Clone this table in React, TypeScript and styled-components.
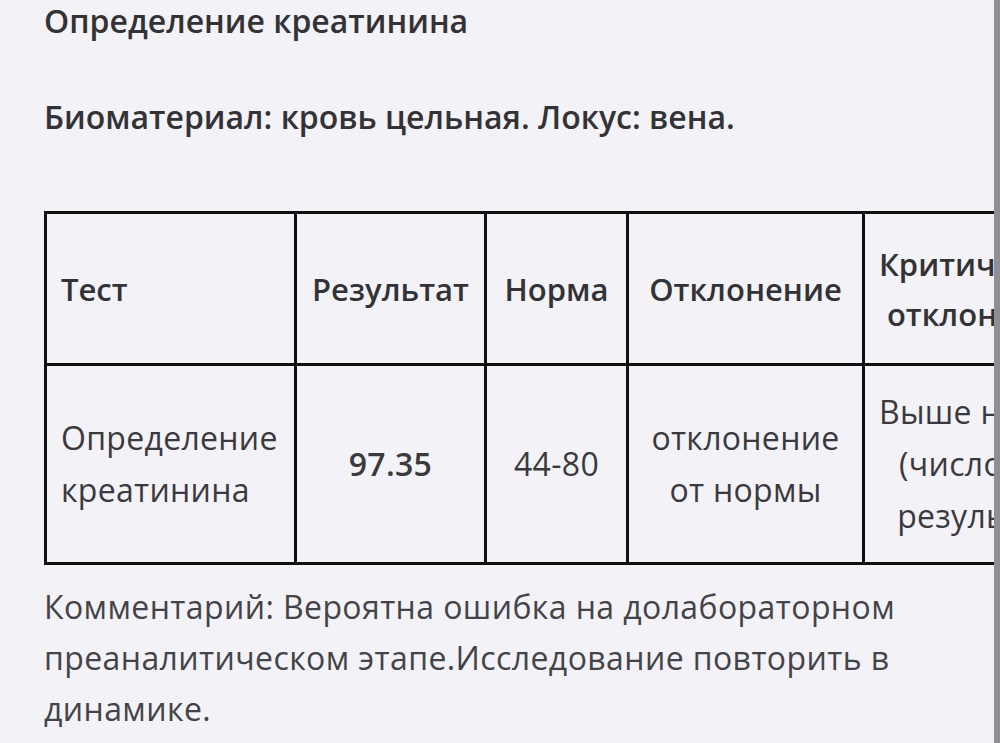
import React from "react";
import styled, { createGlobalStyle } from "styled-components";

const GlobalStyle = createGlobalStyle`
  html, body {
    margin: 0;
    padding: 0;
    background: #f2f2f7;
  }
  body {
    font-family: "Open Sans", "Noto Sans", sans-serif;
    color: #333336;
  }
`;

const Page = styled.div`
  display: flex;
  height: 743px;
  overflow: hidden;
  background: #f2f2f7;
`;

const Content = styled.main`
  flex: 1;
  min-width: 0;
  padding-left: 44px;
  overflow: hidden;
`;

const EdgeBar = styled.div`
  width: 6px;
  flex-shrink: 0;
  background: #8e8e93;
`;

const Heading = styled.h2<{ gap?: number }>`
  margin: ${(p) => p.gap ?? 0}px 0 0;
  font-size: 32px;
  line-height: 42px;
  font-weight: 600;
  color: #333336;
  white-space: nowrap;
`;

const Table = styled.table`
  margin-top: 73px;
  border-collapse: collapse;
  table-layout: fixed;
  width: 1200px;
  border: 3px solid #111;
`;

const HeadCell = styled.th<{ align?: "left" | "center" }>`
  height: 149px;
  padding: 0 14px;
  border: 3px solid #111;
  font-size: 31px;
  line-height: 50px;
  font-weight: 600;
  color: #333336;
  text-align: ${(p) => p.align ?? "center"};
  white-space: nowrap;
`;

const BodyCell = styled.td<{ align?: "left" | "center"; strong?: boolean }>`
  height: 196px;
  padding: 0 14px;
  border: 3px solid #111;
  font-size: 32px;
  line-height: 52px;
  letter-spacing: 0.3px;
  font-weight: ${(p) => (p.strong ? 600 : 400)};
  color: #3a3a3e;
  text-align: ${(p) => p.align ?? "center"};
  vertical-align: middle;
  white-space: nowrap;
`;

const Comment = styled.p`
  margin: 16px 0 0;
  width: 900px;
  font-size: 32px;
  line-height: 51px;
  letter-spacing: 0.4px;
  color: #444448;
`;

const columns = [250, 190, 142, 236, 234, 346];

export default function App() {
  return (
    <>
      <GlobalStyle />
      <Page>
        <Content>
          <Heading>Определение креатинина</Heading>
          <Heading gap={54}>Биоматериал: кровь цельная. Локус: вена.</Heading>
          <Table>
            <colgroup>
              {columns.map((w, i) => (
                <col key={i} style={{ width: w }} />
              ))}
            </colgroup>
            <thead>
              <tr>
                <HeadCell align="left">Тест</HeadCell>
                <HeadCell>Результат</HeadCell>
                <HeadCell>Норма</HeadCell>
                <HeadCell>Отклонение</HeadCell>
                <HeadCell>
                  Критическое
                  <br />
                  отклонение
                </HeadCell>
                <HeadCell>Комментарий</HeadCell>
              </tr>
            </thead>
            <tbody>
              <tr>
                <BodyCell align="left">
                  Определение
                  <br />
                  креатинина
                </BodyCell>
                <BodyCell strong>97.35</BodyCell>
                <BodyCell>44-80</BodyCell>
                <BodyCell>
                  отклонение
                  <br />
                  от нормы
                </BodyCell>
                <BodyCell>
                  Выше нормы
                  <br />
                  (числовой
                  <br />
                  результат)
                </BodyCell>
                <BodyCell>—</BodyCell>
              </tr>
            </tbody>
          </Table>
          <Comment>
            Комментарий: Вероятна ошибка на долабораторном преаналитическом этапе.Исследование повторить в динамике.
          </Comment>
        </Content>
        <EdgeBar />
      </Page>
    </>
  );
}
